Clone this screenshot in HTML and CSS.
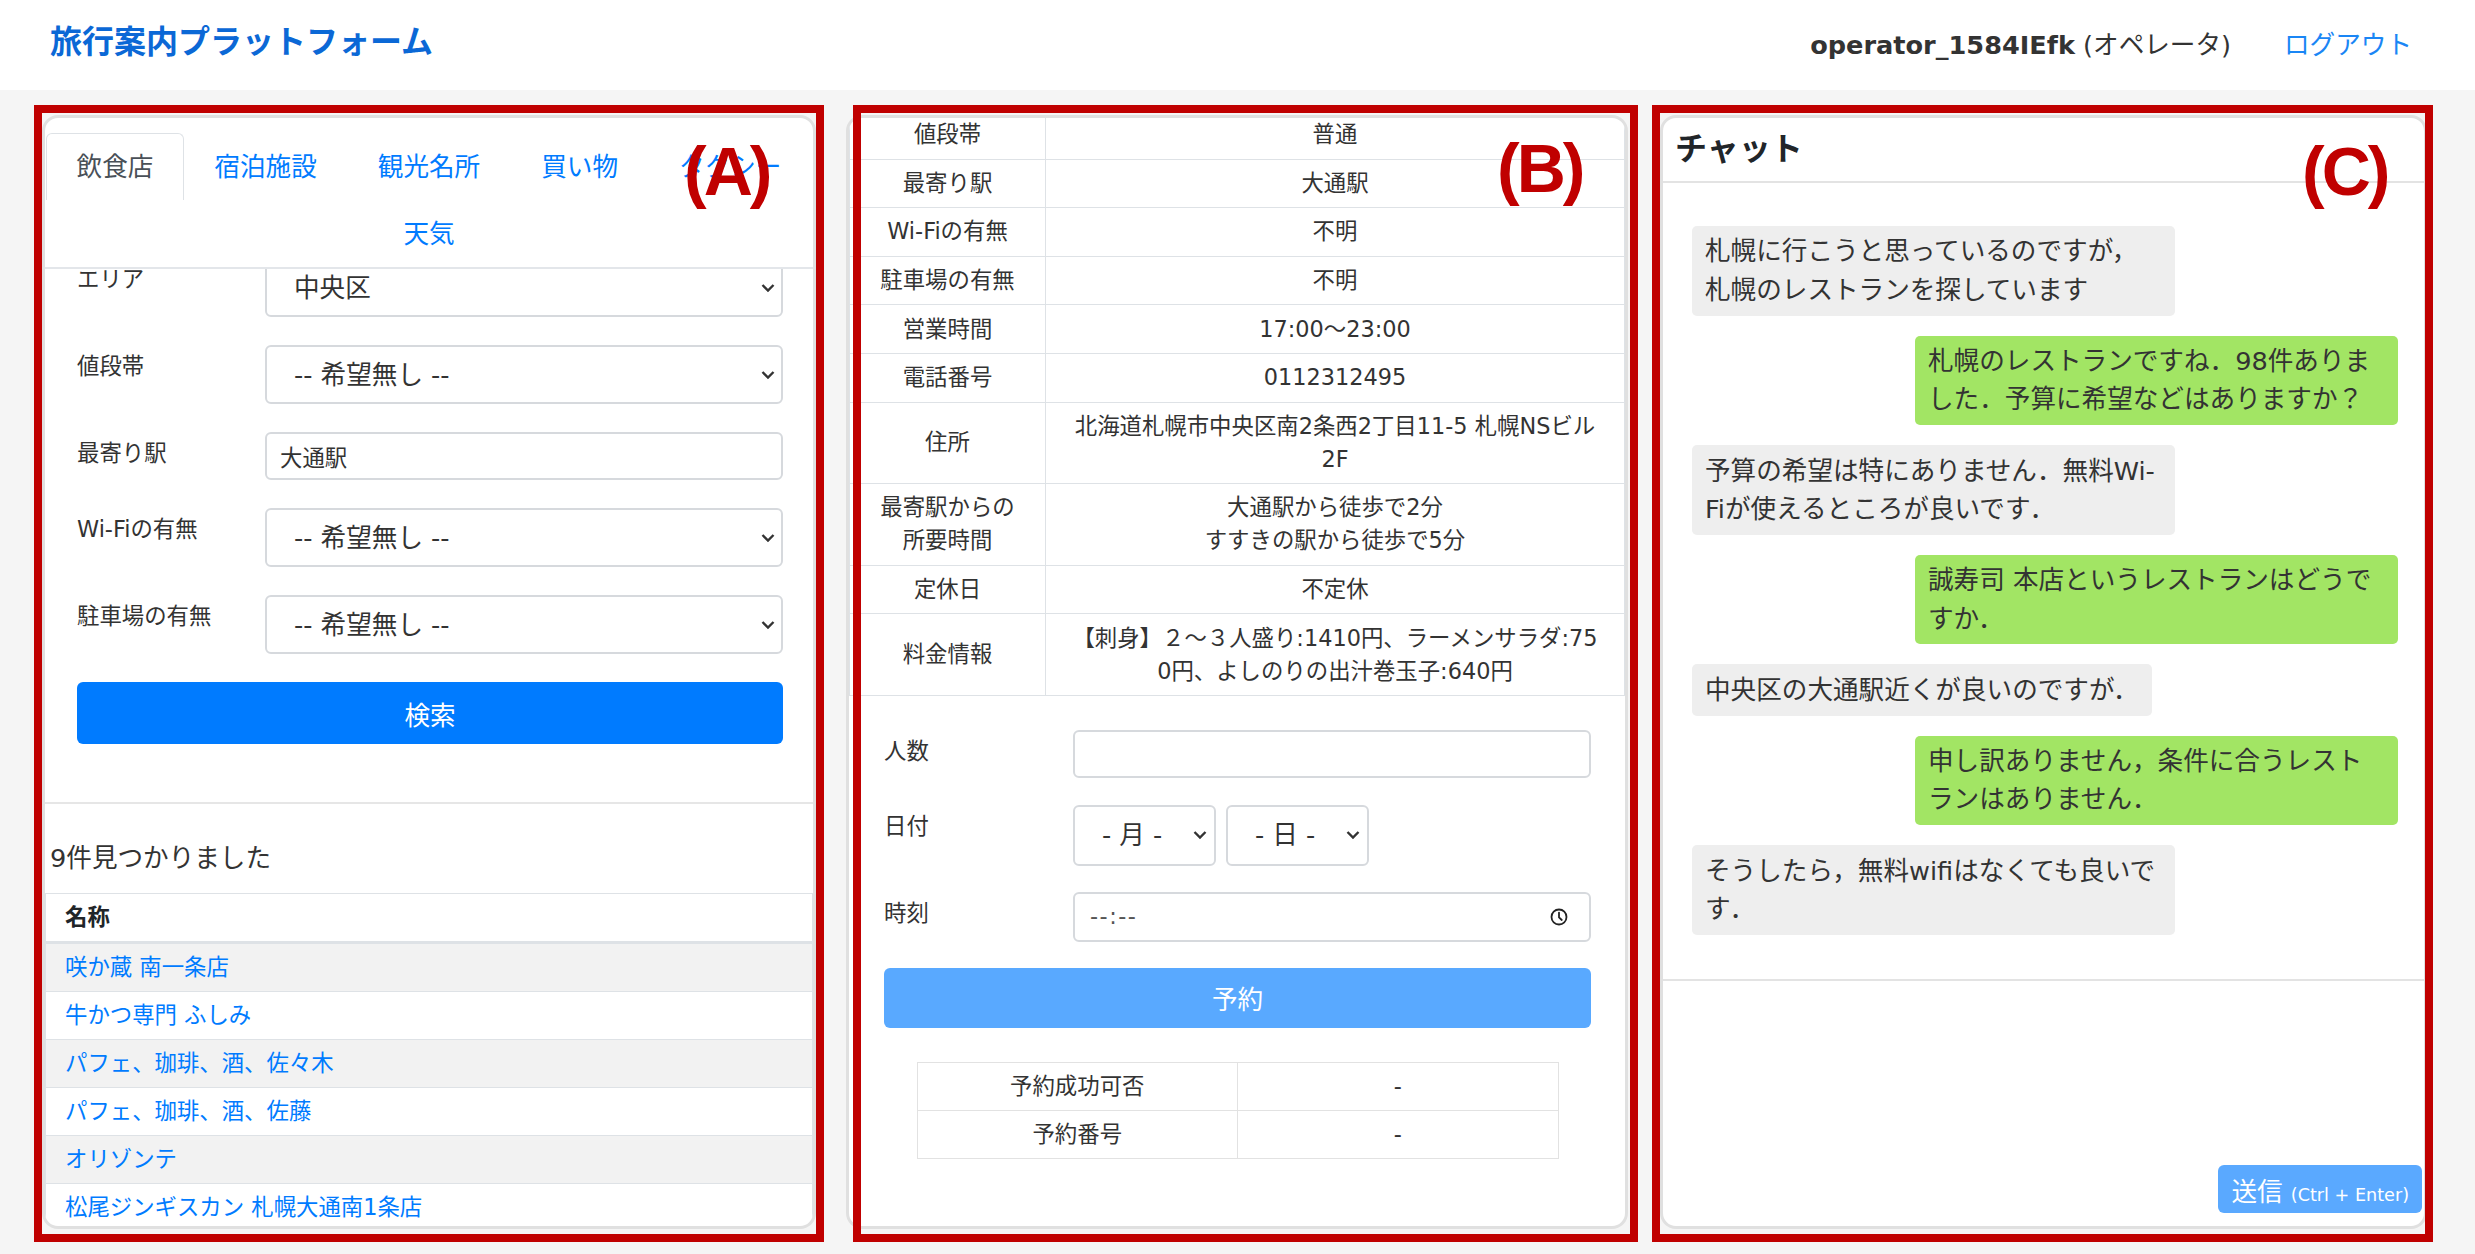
FILE: index.html
```html
<!DOCTYPE html>
<html lang="ja">
<head>
<meta charset="utf-8">
<title>旅行案内プラットフォーム</title>
<link rel="stylesheet" href="styles.css">
</head>
<body>
<header class="topbar">
  <a class="brand" href="#">旅行案内プラットフォーム</a>
  <div class="account">
    <span class="user"><b>operator_1584IEfk</b> (オペレータ)</span>
    <a class="logout" href="#">ログアウト</a>
  </div>
</header>

<main class="columns">
  <!-- (A) search -->
  <section class="panel panel-a">
    <div class="card">
      <nav class="tabs">
        <a class="tab active" href="#">飲食店</a>
        <a class="tab" href="#">宿泊施設</a>
        <a class="tab" href="#">観光名所</a>
        <a class="tab" href="#">買い物</a>
        <a class="tab" href="#">タクシー</a>
        <a class="tab" href="#">天気</a>
      </nav>
      <div class="search-area">
        <form class="search-form">
          <div class="form-row">
            <label class="form-label">エリア</label>
            <div class="select-wrap">
              <select class="control select"><option>中央区</option></select>
              <svg class="chev" width="14" height="9" viewBox="0 0 14 9"><polyline points="1.5,1.5 7,7 12.5,1.5" fill="none" stroke="#333" stroke-width="2.4"/></svg>
            </div>
          </div>
          <div class="form-row">
            <label class="form-label">値段帯</label>
            <div class="select-wrap">
              <select class="control select"><option>-- 希望無し --</option></select>
              <svg class="chev" width="14" height="9" viewBox="0 0 14 9"><polyline points="1.5,1.5 7,7 12.5,1.5" fill="none" stroke="#333" stroke-width="2.4"/></svg>
            </div>
          </div>
          <div class="form-row">
            <label class="form-label">最寄り駅</label>
            <input class="control input-sm" type="text" value="大通駅">
          </div>
          <div class="form-row">
            <label class="form-label">Wi-Fiの有無</label>
            <div class="select-wrap">
              <select class="control select"><option>-- 希望無し --</option></select>
              <svg class="chev" width="14" height="9" viewBox="0 0 14 9"><polyline points="1.5,1.5 7,7 12.5,1.5" fill="none" stroke="#333" stroke-width="2.4"/></svg>
            </div>
          </div>
          <div class="form-row">
            <label class="form-label">駐車場の有無</label>
            <div class="select-wrap">
              <select class="control select"><option>-- 希望無し --</option></select>
              <svg class="chev" width="14" height="9" viewBox="0 0 14 9"><polyline points="1.5,1.5 7,7 12.5,1.5" fill="none" stroke="#333" stroke-width="2.4"/></svg>
            </div>
          </div>
          <button class="btn btn-search" type="button">検索</button>
        </form>
      </div>
      <div class="results">
        <p class="results-count">9件見つかりました</p>
        <table class="list-table">
          <thead><tr><th>名称</th></tr></thead>
          <tbody>
            <tr><td><a href="#">咲か蔵 南一条店</a></td></tr>
            <tr><td><a href="#">牛かつ専門 ふしみ</a></td></tr>
            <tr><td><a href="#">パフェ、珈琲、酒、佐々木</a></td></tr>
            <tr><td><a href="#">パフェ、珈琲、酒、佐藤</a></td></tr>
            <tr><td><a href="#">オリゾンテ</a></td></tr>
            <tr><td><a href="#">松尾ジンギスカン 札幌大通南1条店</a></td></tr>
          </tbody>
        </table>
      </div>
    </div>
    <span class="mark mark-a">(A)</span>
  </section>

  <!-- (B) detail & reservation -->
  <section class="panel panel-b">
    <div class="card">
      <table class="info-table">
        <tr><th>値段帯</th><td>普通</td></tr>
        <tr><th>最寄り駅</th><td>大通駅</td></tr>
        <tr><th>Wi-Fiの有無</th><td>不明</td></tr>
        <tr><th>駐車場の有無</th><td>不明</td></tr>
        <tr><th>営業時間</th><td>17:00～23:00</td></tr>
        <tr><th>電話番号</th><td>0112312495</td></tr>
        <tr><th>住所</th><td>北海道札幌市中央区南2条西2丁目11-5 札幌NSビル<br>2F</td></tr>
        <tr><th>最寄駅からの<br>所要時間</th><td>大通駅から徒歩で2分<br>すすきの駅から徒歩で5分</td></tr>
        <tr><th>定休日</th><td>不定休</td></tr>
        <tr><th>料金情報</th><td>【刺身】２～３人盛り:1410円、ラーメンサラダ:75<br>0円、よしのりの出汁巻玉子:640円</td></tr>
      </table>
      <form class="reserve">
        <div class="form-row row-people">
          <label class="form-label">人数</label>
          <input class="control input-sm" type="text" value="">
        </div>
        <div class="form-row row-date">
          <label class="form-label">日付</label>
          <div class="date-group">
            <div class="select-wrap date-select">
              <select class="control select select-date"><option>- 月 -</option></select>
              <svg class="chev" width="14" height="9" viewBox="0 0 14 9"><polyline points="1.5,1.5 7,7 12.5,1.5" fill="none" stroke="#333" stroke-width="2.4"/></svg>
            </div>
            <div class="select-wrap date-select">
              <select class="control select select-date"><option>- 日 -</option></select>
              <svg class="chev" width="14" height="9" viewBox="0 0 14 9"><polyline points="1.5,1.5 7,7 12.5,1.5" fill="none" stroke="#333" stroke-width="2.4"/></svg>
            </div>
          </div>
        </div>
        <div class="form-row row-time">
          <label class="form-label">時刻</label>
          <div class="control time-field">
            <span class="time-placeholder">--:--</span>
            <svg class="clock" width="18" height="18" viewBox="0 0 18 18"><circle cx="9" cy="9" r="7.5" fill="none" stroke="#222" stroke-width="1.8"/><path d="M9 4.6V9.3L11.8 12" fill="none" stroke="#222" stroke-width="1.8" stroke-linecap="round"/></svg>
          </div>
        </div>
        <button class="btn btn-reserve" type="button">予約</button>
        <table class="result-table">
          <tr><td>予約成功可否</td><td>-</td></tr>
          <tr><td>予約番号</td><td>-</td></tr>
        </table>
      </form>
    </div>
    <span class="mark mark-b">(B)</span>
  </section>

  <!-- (C) chat -->
  <section class="panel panel-c">
    <div class="card">
      <h5 class="chat-head">チャット</h5>
      <div class="chat-log">
        <div class="bubble them">札幌に行こうと思っているのですが，<br>札幌のレストランを探しています</div>
        <div class="bubble me">札幌のレストランですね．98件ありま<br>した．予算に希望などはありますか？</div>
        <div class="bubble them">予算の希望は特にありません．無料Wi-<br>Fiが使えるところが良いです．</div>
        <div class="bubble me">誠寿司 本店というレストランはどうで<br>すか．</div>
        <div class="bubble them fit">中央区の大通駅近くが良いのですが．</div>
        <div class="bubble me">申し訳ありません，条件に合うレスト<br>ランはありません．</div>
        <div class="bubble them">そうしたら，無料wifiはなくても良いで<br>す．</div>
      </div>
      <div class="chat-input">
        <button class="btn btn-send" type="button">送信 <small>(Ctrl + Enter)</small></button>
      </div>
    </div>
    <span class="mark mark-c">(C)</span>
  </section>
</main>
</body>
</html>
```

FILE: styles.css
```css
* { box-sizing: border-box; }

html, body {
  margin: 0;
  padding: 0;
}

body {
  width: 2475px;
  height: 1254px;
  overflow: hidden;
  font-family: "DejaVu Sans", "Noto Sans CJK JP", sans-serif;
  font-size: 25.6px;
  line-height: 1.5;
  color: #333;
  background: #f5f5f5;
}

a { text-decoration: none; color: #007bff; }

/* ---------- top bar ---------- */
.topbar {
  height: 90px;
  background: #fff;
  display: flex;
  align-items: center;
  justify-content: space-between;
  padding: 0 63px 0 50px;
}

.brand {
  font-size: 32px;
  font-weight: bold;
  line-height: 1.2;
  color: #0b68d6;
  margin-top: -5px;
}

.account {
  display: flex;
  align-items: center;
  gap: 53px;
}

.user { color: #333; }
.user b { font-weight: bold; }
.logout { color: #1a86f5; }

/* ---------- columns ---------- */
.columns {
  display: flex;
  align-items: flex-start;
  padding: 25px 0 0 42px;
}

.panel {
  position: relative;
  height: 1114px;
  flex: none;
}

.panel-a { width: 774px; }
.panel-b { width: 782px; margin-left: 30px; }
.panel-c { width: 767px; margin-left: 32px; }

.card {
  height: 100%;
  background: #fff;
  border: 3px solid #e0e0e0;
  border-radius: 16px;
  overflow: hidden;
  display: flex;
  flex-direction: column;
}

/* red annotation frames */
.panel::after {
  content: "";
  position: absolute;
  border: 8px solid #c00000;
  pointer-events: none;
  z-index: 2;
}
.panel-a::after { left: -8px; right: -8px; top: -10px; bottom: -13px; }
.panel-b::after { left: 7px; right: -10px; top: -10px; bottom: -13px; }
.panel-c::after { left: -8px; right: -6px; top: -10px; bottom: -13px; }

.mark {
  position: absolute;
  z-index: 3;
  font-family: "Liberation Sans", sans-serif;
  font-weight: bold;
  font-size: 68px;
  line-height: 1;
  letter-spacing: -3px;
  color: #c00000;
}
.mark-a { left: 642px; top: 22px; }
.mark-b { left: 651px; top: 19px; }
.mark-c { left: 642px; top: 22px; }

/* ---------- (A) tabs ---------- */
.tabs {
  flex: none;
  height: 151px;
  display: flex;
  flex-wrap: wrap;
  justify-content: center;
  align-content: flex-start;
  padding-top: 15px;
  border-bottom: 2px solid #e3e6ea;
}

.tab {
  height: 67px;
  display: flex;
  align-items: center;
  padding: 0 29.5px;
  border: 1px solid transparent;
  border-bottom: 0;
  border-radius: 6px 6px 0 0;
  color: #007bff;
  line-height: 38.4px;
}

.tab.active {
  color: #495057;
  border-color: #dee2e6;
  background: #fff;
}

/* ---------- forms ---------- */
.search-area {
  flex: none;
  height: 535px;
  overflow: hidden;
  border-bottom: 2px solid #e6e6e6;
  padding: 0 30px 0 32px;
}

.search-form { margin-top: -11px; }

.form-row {
  display: grid;
  grid-template-columns: 188px 1fr;
  align-items: start;
  margin-bottom: 28px;
}

.form-label {
  font-size: 22.4px;
  line-height: 33.6px;
  padding-top: 5px;
  color: #333;
}

.control {
  display: block;
  width: 100%;
  background: #fff;
  border: 2px solid #d6d9dd;
  border-radius: 6px;
  color: #495057;
  font-family: inherit;
  margin: 0;
}

.select-wrap { position: relative; }

.select {
  height: 59px;
  font-size: 25.6px;
  padding: 0 40px 0 27px;
  -webkit-appearance: none;
  appearance: none;
  color: #333;
}

.chev {
  position: absolute;
  right: 8px;
  top: 50%;
  transform: translateY(-50%);
  pointer-events: none;
}

.input-sm {
  height: 48px;
  font-size: 22.4px;
  padding: 0 13px;
  color: #333;
}

.btn {
  display: block;
  border: 0;
  border-radius: 6px;
  color: #fff;
  font-family: inherit;
  font-size: 25.6px;
  cursor: pointer;
}

.btn-search {
  width: 100%;
  height: 62px;
  background: #007bff;
}

/* ---------- (A) results ---------- */
.results {
  flex: 1;
  overflow: hidden;
  padding-top: 35px;
}

.results-count {
  margin: 0 0 15.6px 5px;
  font-size: 25.6px;
  line-height: 38.4px;
  color: #333;
}

.list-table {
  width: 100%;
  border-collapse: collapse;
  font-size: 22.4px;
  line-height: 33px;
}

.list-table th,
.list-table td {
  border: 1.5px solid #dee2e6;
  padding: 7px 19px;
  text-align: left;
}

.list-table th { font-weight: bold; color: #212529; }
.list-table thead th { border-bottom-width: 3px; }
.list-table tbody tr:nth-child(odd) { background: #f2f2f2; }

/* ---------- (B) info ---------- */
.info-table {
  flex: none;
  width: 100%;
  margin-top: -8px;
  border-collapse: collapse;
  font-size: 22.4px;
  line-height: 33px;
  text-align: center;
  color: #333;
}

.info-table th,
.info-table td {
  border: 1.6px solid #dee2e6;
  padding: 7.3px 8px;
  font-weight: normal;
  white-space: nowrap;
}

.info-table th { width: 196px; }

.reserve {
  padding: 34px 34px 0 35px;
}

.reserve .form-row { grid-template-columns: 189px 1fr; }
.row-people { margin-bottom: 27px !important; }
.row-date { margin-bottom: 26px !important; }
.row-time { margin-bottom: 26px !important; }

.date-group {
  display: flex;
  gap: 10px;
}

.date-select { width: 143px; }

.select-date {
  height: 61px;
  padding-left: 27px;
}

.date-select .chev { right: 9px; }

.time-field {
  height: 50px;
  display: flex;
  align-items: center;
  justify-content: space-between;
  padding: 0 21px 0 15px;
}

.time-placeholder {
  font-size: 22.4px;
  letter-spacing: 1.5px;
  color: #555;
}

.btn-reserve {
  width: 100%;
  height: 60px;
  background: #59a9ff;
}

.result-table {
  width: 642px;
  margin: 34px auto 0;
  border-collapse: collapse;
  font-size: 22.4px;
  line-height: 33px;
  text-align: center;
  color: #333;
}

.result-table td {
  width: 50%;
  border: 1.5px solid #e2e2e2;
  padding: 7px 8px;
}

/* ---------- (C) chat ---------- */
.chat-head {
  flex: none;
  margin: 0;
  height: 65px;
  display: flex;
  align-items: center;
  padding: 0 12px;
  border-bottom: 2px solid #e3e3e3;
  font-size: 32px;
  font-weight: bold;
  line-height: 1.2;
  color: #212529;
}

.chat-log {
  flex: none;
  height: 798px;
  border-bottom: 2px solid #e3e3e3;
  padding: 43px 26px 0 29px;
  display: flex;
  flex-direction: column;
  gap: 20px;
}

.bubble {
  width: 483px;
  padding: 6.4px 13px;
  line-height: 38.4px;
  font-size: 25.6px;
  border-radius: 5px;
  white-space: nowrap;
  color: #333;
}

.bubble.them {
  align-self: flex-start;
  background: #eeeeee;
}

.bubble.me {
  align-self: flex-end;
  background: #a2e564;
}

.bubble.fit { width: auto; }

.chat-input {
  flex: 1;
  display: flex;
  justify-content: flex-end;
  align-items: flex-end;
  padding: 0 2px 13px 0;
}

.btn-send {
  height: 48px;
  padding: 0 13px;
  background: #5aa9ff;
  white-space: nowrap;
}

.btn-send small { font-size: 17.6px; }
```
